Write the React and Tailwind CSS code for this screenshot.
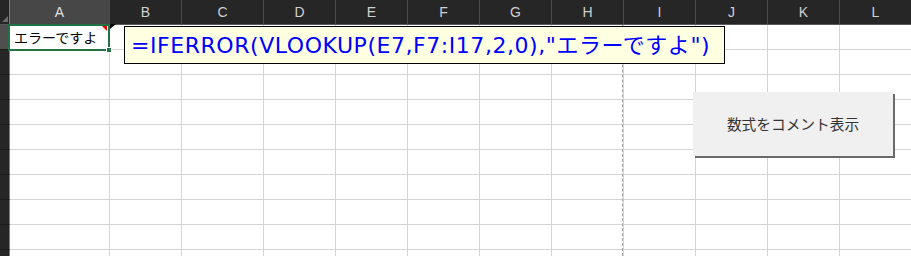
import React from "react";

const cols = [
  { name: "A", w: "w-[100px]" },
  { name: "B", w: "w-[72px]" },
  { name: "C", w: "w-[82px]" },
  { name: "D", w: "w-[72px]" },
  { name: "E", w: "w-[72px]" },
  { name: "F", w: "w-[72px]" },
  { name: "G", w: "w-[72px]" },
  { name: "H", w: "w-[72px]" },
  { name: "I", w: "w-[72px]" },
  { name: "J", w: "w-[72px]" },
  { name: "K", w: "w-[72px]" },
  { name: "L", w: "w-[72px]" },
];

const rows = [1, 2, 3, 4, 5, 6, 7, 8, 9, 10];

export default function App() {
  return (
    <div className="relative w-[911px] h-[256px] overflow-hidden bg-white font-['Liberation_Sans','Noto_Sans_CJK_JP',sans-serif]">
      {/* column headers */}
      <div className="flex h-[25px] bg-[#262626] border-b border-[#5a5a5a]">
        <div className="w-[10px] shrink-0 relative bg-[#262626] border-r border-[#7a7a7a]">
          <div className="absolute right-[1px] bottom-[2px] w-0 h-0 border-l-[6px] border-l-transparent border-b-[6px] border-b-[#6a6a6a]" />
        </div>
        {cols.map((c) => (
          <div
            key={c.name}
            className={`${c.w} shrink-0 flex items-center justify-center text-[14px] border-r border-[#4a4a4a] ${
              c.name === "A" ? "bg-[#474747] text-[#e0e0e0]" : "text-[#d0d0d0]"
            }`}
          >
            {c.name}
          </div>
        ))}
      </div>

      {/* body rows */}
      {rows.map((r) => (
        <div key={r} className="flex h-[25px]">
          <div
            className={`w-[10px] shrink-0 border-r border-[#7a7a7a] border-b border-b-[#1a1a1a] ${
              r === 1 ? "bg-[#4f4f4f]" : "bg-[#262626]"
            }`}
          />
          {cols.map((c) => (
            <div
              key={c.name}
              className={`${c.w} shrink-0 border-r border-b border-[#d4d4d4] text-[14px] text-black flex items-center pl-[4px] font-['Noto_Sans_CJK_JP',sans-serif]`}
            >
              {r === 1 && c.name === "A" ? "エラーですよ" : ""}
            </div>
          ))}
        </div>
      ))}

      {/* page break */}
      <div className="absolute left-[622px] top-[25px] h-[231px] border-l border-dashed border-[#a0a0a0]" />

      {/* selection A1 */}
      <div className="absolute left-[8px] top-[24px] w-[102px] h-[27px] border-2 border-[#217346]">
        <div className="absolute right-[1px] top-[0px] w-0 h-0 border-l-[5px] border-l-transparent border-t-[5px] border-t-[#e00000]" />
        <div className="absolute -right-[4px] -bottom-[4px] w-[6px] h-[6px] bg-[#217346] border border-white" />
      </div>

      {/* comment connector */}
      <div className="absolute left-[110px] top-[24px] w-0 h-0 border-r-[6px] border-r-transparent border-t-[5px] border-t-black" />

      {/* comment box */}
      <div className="absolute left-[124px] top-[26px] w-[601px] h-[38px] bg-[#ffffe1] border border-black flex items-center pl-[6px] text-[22px] tracking-[0.55px] text-[#0000ff] whitespace-nowrap font-['DejaVu_Sans','Noto_Sans_CJK_JP',sans-serif]">
        =IFERROR(VLOOKUP(E7,F7:I17,2,0),"エラーですよ")
      </div>

      {/* button */}
      <div className="absolute left-[693px] top-[92px] w-[200px] h-[64px] bg-[#f0f0f0] shadow-[2px_2px_0_#6a6a6a] flex items-center justify-center text-[14.7px] text-[#333] font-['Noto_Sans_CJK_JP',sans-serif]">
        数式をコメント表示
      </div>
    </div>
  );
}
